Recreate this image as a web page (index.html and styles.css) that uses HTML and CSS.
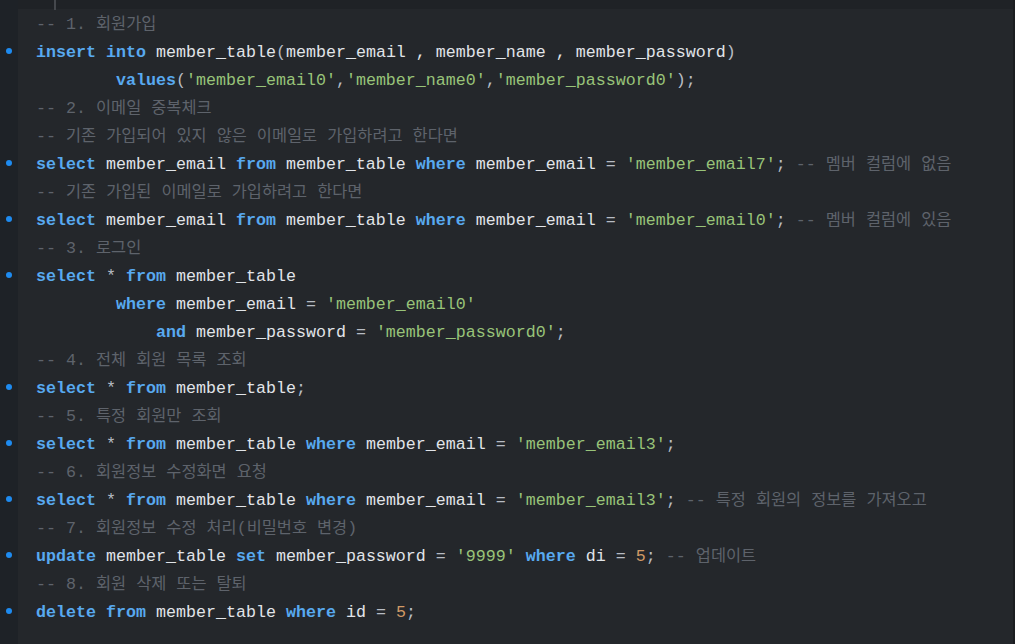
FILE: index.html
```html
<!DOCTYPE html>
<html lang="ko">
<head>
<meta charset="utf-8">
<link rel="stylesheet" href="styles.css">
</head>
<body>
<div class="editor">
  <div class="gutter">
    <div class="g top"></div>
    <div class="g"></div>
    <div class="g"><span class="dot"></span></div>
    <div class="g"></div>
    <div class="g"></div>
    <div class="g"></div>
    <div class="g"><span class="dot"></span></div>
    <div class="g"></div>
    <div class="g"><span class="dot"></span></div>
    <div class="g"></div>
    <div class="g"><span class="dot"></span></div>
    <div class="g"></div>
    <div class="g"></div>
    <div class="g"></div>
    <div class="g"><span class="dot"></span></div>
    <div class="g"></div>
    <div class="g"><span class="dot"></span></div>
    <div class="g"></div>
    <div class="g"><span class="dot"></span></div>
    <div class="g"></div>
    <div class="g"><span class="dot"></span></div>
    <div class="g"></div>
    <div class="g"><span class="dot"></span></div>
  </div>
  <div class="code">
    <div class="line top"><span class="caret"></span></div>
    <div class="line"><span class="c">-- 1. <span class="ko">회원가입</span></span></div>
    <div class="line"><span class="kw">insert</span> <span class="kw">into</span> member_table<span class="p">(</span>member_email , member_name , member_password<span class="p">)</span></div>
    <div class="line">        <span class="kw">values</span><span class="p">(</span><span class="s">'member_email0'</span><span class="p">,</span><span class="s">'member_name0'</span><span class="p">,</span><span class="s">'member_password0'</span><span class="p">);</span></div>
    <div class="line"><span class="c">-- 2. <span class="ko">이메일</span> <span class="ko">중복체크</span></span></div>
    <div class="line"><span class="c">-- <span class="ko">기존</span> <span class="ko">가입되어</span> <span class="ko">있지</span> <span class="ko">않은</span> <span class="ko">이메일로</span> <span class="ko">가입하려고</span> <span class="ko">한다면</span></span></div>
    <div class="line"><span class="kw">select</span> member_email <span class="kw">from</span> member_table <span class="kw">where</span> member_email <span class="p">=</span> <span class="s">'member_email7'</span><span class="p">;</span> <span class="c">-- <span class="ko">멤버</span> <span class="ko">컬럼에</span> <span class="ko">없음</span></span></div>
    <div class="line"><span class="c">-- <span class="ko">기존</span> <span class="ko">가입된</span> <span class="ko">이메일로</span> <span class="ko">가입하려고</span> <span class="ko">한다면</span></span></div>
    <div class="line"><span class="kw">select</span> member_email <span class="kw">from</span> member_table <span class="kw">where</span> member_email <span class="p">=</span> <span class="s">'member_email0'</span><span class="p">;</span> <span class="c">-- <span class="ko">멤버</span> <span class="ko">컬럼에</span> <span class="ko">있음</span></span></div>
    <div class="line"><span class="c">-- 3. <span class="ko">로그인</span></span></div>
    <div class="line"><span class="kw">select</span> <span class="p">*</span> <span class="kw">from</span> member_table</div>
    <div class="line">        <span class="kw">where</span> member_email <span class="p">=</span> <span class="s">'member_email0'</span></div>
    <div class="line">            <span class="kw">and</span> member_password <span class="p">=</span> <span class="s">'member_password0'</span><span class="p">;</span></div>
    <div class="line"><span class="c">-- 4. <span class="ko">전체</span> <span class="ko">회원</span> <span class="ko">목록</span> <span class="ko">조회</span></span></div>
    <div class="line"><span class="kw">select</span> <span class="p">*</span> <span class="kw">from</span> member_table<span class="p">;</span></div>
    <div class="line"><span class="c">-- 5. <span class="ko">특정</span> <span class="ko">회원만</span> <span class="ko">조회</span></span></div>
    <div class="line"><span class="kw">select</span> <span class="p">*</span> <span class="kw">from</span> member_table <span class="kw">where</span> member_email <span class="p">=</span> <span class="s">'member_email3'</span><span class="p">;</span></div>
    <div class="line"><span class="c">-- 6. <span class="ko">회원정보</span> <span class="ko">수정화면</span> <span class="ko">요청</span></span></div>
    <div class="line"><span class="kw">select</span> <span class="p">*</span> <span class="kw">from</span> member_table <span class="kw">where</span> member_email <span class="p">=</span> <span class="s">'member_email3'</span><span class="p">;</span> <span class="c">-- <span class="ko">특정</span> <span class="ko">회원의</span> <span class="ko">정보를</span> <span class="ko">가져오고</span></span></div>
    <div class="line"><span class="c">-- 7. <span class="ko">회원정보</span> <span class="ko">수정</span> <span class="ko">처리</span>(<span class="ko">비밀번호</span> <span class="ko">변경</span>)</span></div>
    <div class="line"><span class="kw">update</span> member_table <span class="kw">set</span> member_password <span class="p">=</span> <span class="s">'9999'</span> <span class="kw">where</span> di <span class="p">=</span> <span class="n">5</span><span class="p">;</span> <span class="c">-- <span class="ko">업데이트</span></span></div>
    <div class="line"><span class="c">-- 8. <span class="ko">회원</span> <span class="ko">삭제</span> <span class="ko">또는</span> <span class="ko">탈퇴</span></span></div>
    <div class="line"><span class="kw">delete</span> <span class="kw">from</span> member_table <span class="kw">where</span> id <span class="p">=</span> <span class="n">5</span><span class="p">;</span></div>
  </div>
</div>
</body>
</html>
```
FILE: styles.css
```css
html, body {
  margin: 0;
  padding: 0;
  height: 100%;
  background: #24272b;
  overflow: hidden;
}

.editor {
  display: flex;
  height: 644px;
  border-right: 2px solid #1b1d20;
  box-sizing: border-box;
}

.gutter {
  width: 18px;
  flex: none;
  background: #1e2227;
}

.g {
  height: 28px;
  display: flex;
  align-items: center;
  justify-content: center;
}

.g.top {
  height: 9px;
}

.dot {
  width: 6px;
  height: 6px;
  border-radius: 50%;
  background: #1e8bf0;
}

.code {
  flex: 1;
  font-family: "Liberation Mono", "Noto Sans CJK KR", monospace;
  font-size: 16.67px;
  color: #e1e4e9;
}

.line {
  height: 28px;
  line-height: 28px;
  padding-top: 2px;
  box-sizing: border-box;
  padding-left: 18px;
  white-space: pre;
}

.line.top {
  height: 9px;
  padding-top: 0;
  background: #1f2226;
  position: relative;
}

.caret {
  position: absolute;
  left: 36px;
  top: 0;
  width: 2px;
  height: 10px;
  background: #45484d;
}

.kw {
  color: #58a9ef;
  font-weight: bold;
}

.s {
  color: #98c379;
}

.c {
  color: #5e636b;
}

.n {
  color: #d19a66;
}

.p {
  color: #b7bcc4;
}

.ko {
  font-family: "Noto Sans CJK KR", sans-serif;
  font-size: 16.4px;
  line-height: 1;
}
```
